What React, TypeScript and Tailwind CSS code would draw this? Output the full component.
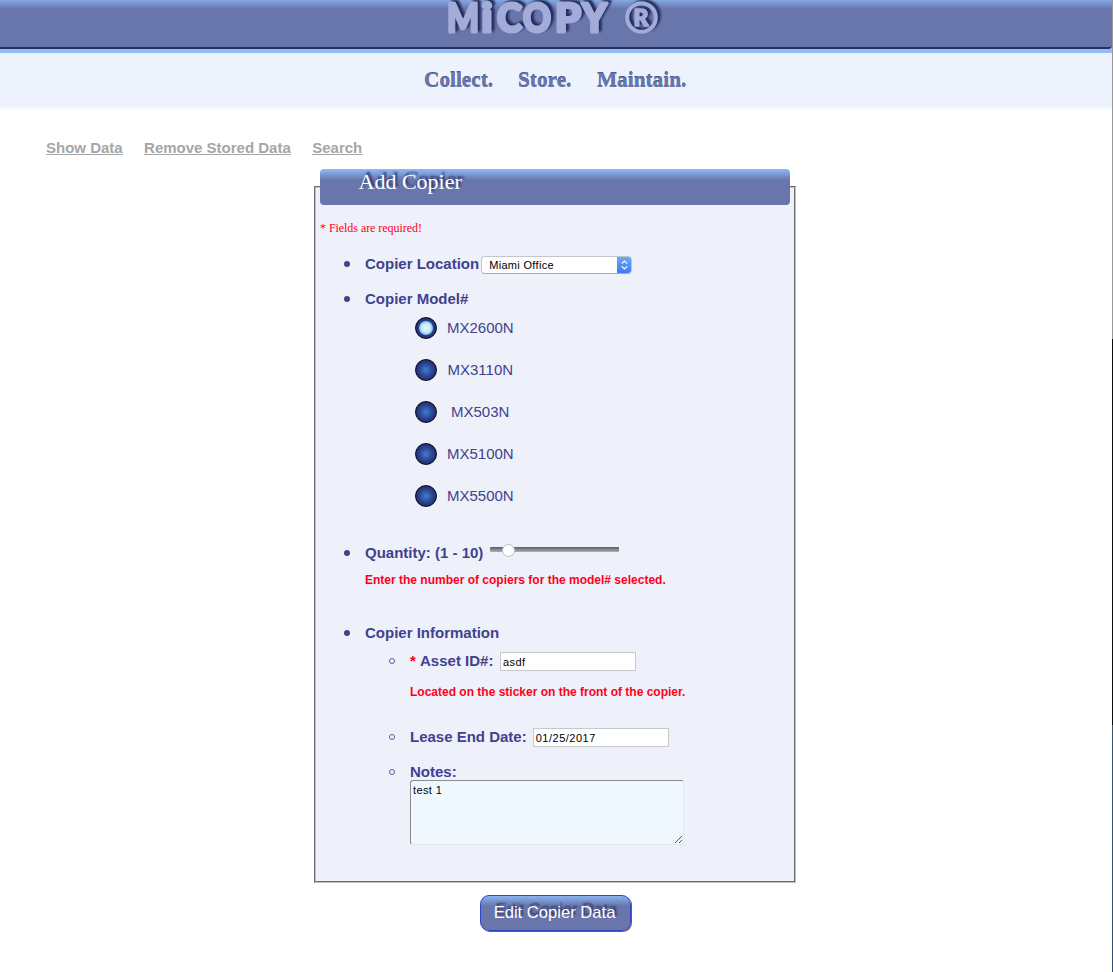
import type { ReactNode } from "react";

const SANS = "font-['Liberation_Sans',Arial,sans-serif]";
const SERIF = "font-['Liberation_Serif','Times_New_Roman',serif]";

const logoGlyphs = [
  { ch: "M", x: 447, w: 32 },
  { ch: "i", x: 481.5, w: 11 },
  { ch: "C", x: 497, w: 25 },
  { ch: "O", x: 523, w: 28 },
  { ch: "P", x: 555, w: 26 },
  { ch: "Y", x: 582, w: 25 },
];

const models = [
  { name: "MX2600N", pad: "pl-[10px]" },
  { name: "MX3110N", pad: "pl-[10.5px]" },
  { name: "MX503N", pad: "pl-[14px]" },
  { name: "MX5100N", pad: "pl-[10px]" },
  { name: "MX5500N", pad: "pl-[10px]" },
];

function Logo() {
  return (
    <svg
      width="1112"
      height="47"
      className="block [filter:drop-shadow(3px_-2px_1px_#232c5c)]"
      fontFamily="Lato, sans-serif"
      fontWeight="900"
      fill="#a3acd9"
      stroke="#a3acd9"
    >
      {logoGlyphs.map((g) => (
        <text
          key={g.ch}
          x={g.x}
          y="32"
          fontSize="39"
          strokeWidth="3"
          strokeLinejoin="round"
          textLength={g.w}
          lengthAdjust="spacingAndGlyphs"
        >
          {g.ch}
        </text>
      ))}
      <circle cx="641.5" cy="17.5" r="14.3" fill="none" strokeWidth="4" />
      <text x="633.5" y="26" fontSize="23" strokeWidth="1.6" strokeLinejoin="round">
        R
      </text>
    </svg>
  );
}

function Row({ children, className }: { children: ReactNode; className: string }) {
  return (
    <div className={`flex h-5 items-center whitespace-pre text-[15px] leading-5 font-bold ${className}`}>
      {children}
    </div>
  );
}

function Disc() {
  return <span className="mr-[15.5px] ml-[23.5px] size-[6px] shrink-0 rounded-full bg-[#41418f]" />;
}

function Ring() {
  return <span className="mr-[15px] ml-[69px] size-[6px] shrink-0 rounded-full border border-[#5c5ca0]" />;
}

function Radio({ on }: { on: boolean }) {
  return (
    <span className="flex size-[22px] items-center justify-center rounded-full border border-[#070a1c] bg-[radial-gradient(circle,#3f80d0_0%,#2f4c9c_40%,#202a66_75%)]">
      {on && (
        <span className="size-[14px] rounded-full bg-[radial-gradient(circle,#e6f8ff_0%,#c4ebfa_45%,#69b5e0_75%)]" />
      )}
    </span>
  );
}

export default function App() {
  return (
    <div className={`flex h-[972px] w-[1113px] overflow-hidden bg-white text-[#41418f] ${SANS}`}>
      <div className="w-[1112px] shrink-0">
        <div className="bg-[#93bcfb] pb-1">
          <header className="h-[49px] overflow-hidden rounded-br-[4px] border-b-2 border-[#282e5e] bg-[linear-gradient(#84a8e4_0px,#6876ab_9px,#6876ab_100%)]">
            <Logo />
          </header>
        </div>
        <div
          className={`flex h-[56px] border-b-2 border-[#f2f8ff] bg-[#edf2fc] pt-[15px] pl-[424px] text-[21.3px] leading-6 font-bold text-[#6876ab] ${SERIF} [text-shadow:0_-1px_0_#4a5a92]`}
        >
          <span className="w-[94px]">Collect.</span>
          <span className="w-[79px]">Store.</span>
          <span>Maintain.</span>
        </div>
        <nav className="flex h-[76px] items-start gap-[21.4px] pt-[29px] pl-[46px] text-[15px] leading-5 font-bold text-[#a6a6a6] underline">
          <a>Show Data</a>
          <a>Remove Stored Data</a>
          <a>Search</a>
        </nav>

        <section className="mt-px ml-[314px] h-[697px] w-[482px] border-2 border-[#c0c0c0] bg-[#eef1fa] [border-style:groove]">
          <h2
            className={`mx-1 -mt-[19px] h-9 rounded-[4px] bg-[linear-gradient(#8fbaf8_0px,#6876ab_11px,#6876ab_100%)] pl-[38.5px] text-[22px] leading-[26px] text-white ${SERIF} [text-shadow:2px_-3px_2px_#2c3568]`}
          >
            Add Copier
          </h2>
          <p className={`mt-[15px] h-4 pl-1 text-[12px] leading-4 tracking-[-0.05px] text-[#ff0020] ${SERIF}`}>
            * Fields are required!
          </p>

          <Row className="mt-[18px] pl-1">
            <Disc />
            Copier Location
            <span className="mt-[2px] ml-[2px] flex h-[18px] w-[151px] overflow-hidden rounded-[4px] border border-[#c2c5cc] border-b-[#a9abb2] bg-white text-[11px] leading-4 font-normal tracking-[0.32px] text-black">
              <span className="flex-1 pl-[7px]">Miami Office</span>
              <span className="-mr-px -mt-px flex h-[18px] w-[15px] items-center justify-center bg-[linear-gradient(#70abf8,#3a77f5)]">
                <svg width="9" height="12" viewBox="0 0 9 12" fill="none" stroke="white" strokeWidth="1.2">
                  <path d="M1.8 4.6 4.5 2 7.2 4.6M1.8 7.4 4.5 10 7.2 7.4" />
                </svg>
              </span>
            </span>
          </Row>
          <Row className="mt-[15px] pl-1">
            <Disc />
            Copier Model#
          </Row>
          <div className="mt-2 flex flex-col gap-5 pl-[99px]">
            {models.map((m, i) => (
              <div key={m.name} className="flex h-[22px] items-center text-[15px]">
                <Radio on={i === 0} />
                <span className={m.pad}>{m.name}</span>
              </div>
            ))}
          </div>

          <Row className="mt-9 pl-1">
            <Disc />
            Quantity: (1 - 10)
            <span className="mb-[7px] ml-[7px] flex h-[5px] w-[129px] items-center rounded-[1px] bg-[linear-gradient(#5c5c62,#b0b0b4)]">
              <span className="mt-[2px] ml-3 size-[13px] rounded-full border border-[#bfc1c9] bg-white" />
            </span>
          </Row>
          <p className="mt-[7px] h-5 pl-[49px] text-[12px] leading-5 font-bold text-[#ff0020]">
            Enter the number of copiers for the model# selected.
          </p>

          <Row className="mt-[33px] pl-1">
            <Disc />
            Copier Information
          </Row>
          <Row className="mt-2 pl-1">
            <Ring />
            <span className="text-[#ff0020]">* </span>
            Asset ID#:
            <span className="ml-[6.5px] h-[19px] w-[136px] border border-[#c8c8c8] bg-white pl-[2px] text-[11px] leading-[18px] font-normal tracking-[0.5px] text-black">
              asdf
            </span>
          </Row>
          <p className="mt-[11px] h-5 pl-[94px] text-[12px] leading-5 font-bold text-[#ff0020]">
            Located on the sticker on the front of the copier.
          </p>
          <Row className="mt-[25px] pl-1">
            <Ring />
            Lease End Date:
            <span className="ml-[6px] h-[19px] w-[136px] border border-[#c8c8c8] bg-white pl-[2px] text-[11px] leading-[18px] font-normal tracking-[0.5px] text-black">
              01/25/2017
            </span>
          </Row>
          <Row className="mt-[15px] pl-1">
            <Ring />
            Notes:
          </Row>
          <div className="-mt-[2px] ml-[94px] flex h-[65px] w-[274px] items-start justify-between rounded-[3px] border border-[#e4e8ef] border-t-[#8c8c8c] border-l-[#8c8c8c] bg-[#eff8ff] pl-[2px] text-[11px] leading-[18px] tracking-[0.4px] text-black">
            test 1
            <svg width="9" height="9" className="self-end" stroke="#555" fill="none">
              <path d="M1 8 8 1M5 8 8 5" />
            </svg>
          </div>
        </section>

        <button className="mt-3 ml-[480px] block h-9 w-[151px] rounded-[9px] border border-[#2f45c4] bg-[linear-gradient(#8ab2f2_0px,#6876ab_10px,#6876ab_100%)] pr-[2px] text-[16.6px] leading-[34px] text-white shadow-[1px_1px_0_0px_#606068] [text-shadow:2px_-3px_2px_#2c3568]">
          Edit Copier Data
        </button>
      </div>
      <div className="w-px bg-[linear-gradient(#999_0px,#999_339px,#0c0c0c_339px,#0c0c0c_725px,#3a5468_725px,#33506a_100%)]" />
    </div>
  );
}
